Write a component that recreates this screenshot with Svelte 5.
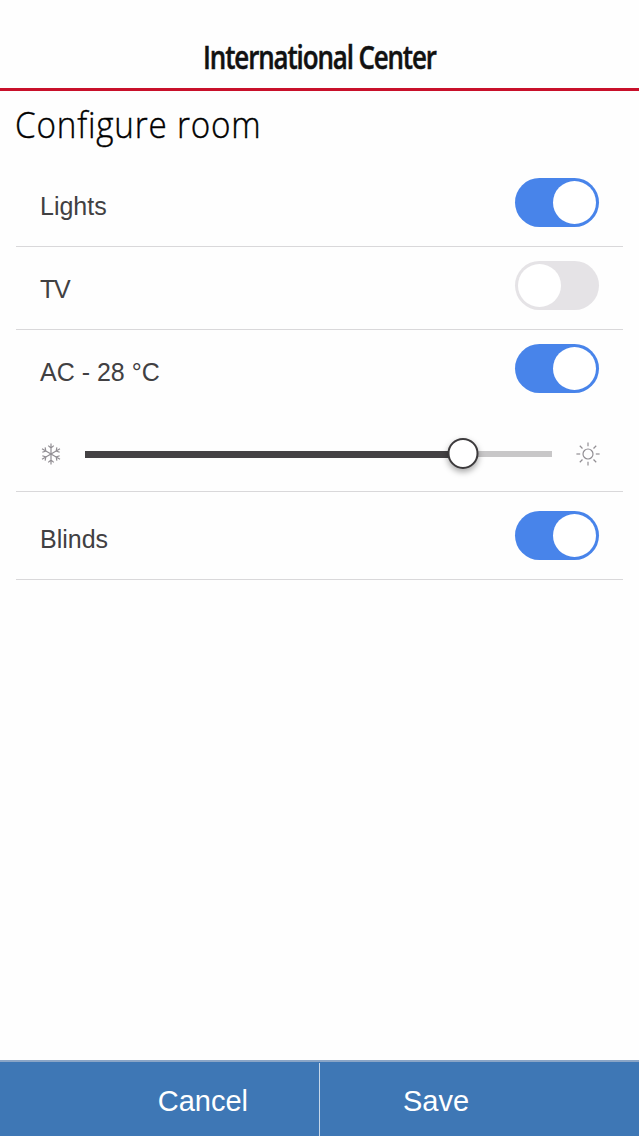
<script lang="ts">
  const MIN_TEMP = 10;
  const MAX_TEMP = 32.25;

  let lights = $state(true);
  let tv = $state(false);
  let ac = $state(true);
  let blinds = $state(true);
  let temperature = $state(28);

  let percent = $derived(((temperature - MIN_TEMP) / (MAX_TEMP - MIN_TEMP)) * 100);

  let track: HTMLDivElement;
  let dragging = false;

  function moveTo(e: PointerEvent) {
    const rect = track.getBoundingClientRect();
    const ratio = Math.max(0, Math.min(1, (e.clientX - rect.left) / rect.width));
    temperature = Math.round(MIN_TEMP + ratio * (MAX_TEMP - MIN_TEMP));
  }

  function onPointerDown(e: PointerEvent) {
    dragging = true;
    track.setPointerCapture(e.pointerId);
    moveTo(e);
  }

  function onPointerMove(e: PointerEvent) {
    if (dragging) moveTo(e);
  }

  function onPointerUp() {
    dragging = false;
  }
</script>

{#snippet toggle(label: string, on: boolean, flip: () => void)}
  <button class="toggle" class:on role="switch" aria-checked={on} aria-label={label} onclick={flip}>
    <span class="knob"></span>
  </button>
{/snippet}

<div class="screen">
  <header>
    <span class="brand">International Center</span>
  </header>

  <main>
    <h1><span>Configure room</span></h1>

    <section class="row first">
      <span class="label">Lights</span>
      {@render toggle('Lights', lights, () => (lights = !lights))}
    </section>

    <section class="row">
      <span class="label tight">TV</span>
      {@render toggle('TV', tv, () => (tv = !tv))}
    </section>

    <section class="row climate">
      <div class="line">
        <span class="label">AC - {temperature} °C</span>
        {@render toggle('AC', ac, () => (ac = !ac))}
      </div>
      <div class="slider">
        <svg viewBox="0 0 22 22" width="22" height="22">
          {#each [0, 60, 120, 180, 240, 300] as angle}
            <path d="M11 11V.6M8.2 2.6 11 5l2.8-2.4" transform="rotate({angle} 11 11)" />
          {/each}
        </svg>

        <!-- svelte-ignore a11y_no_static_element_interactions -->
        <div
          class="track"
          bind:this={track}
          onpointerdown={onPointerDown}
          onpointermove={onPointerMove}
          onpointerup={onPointerUp}
        >
          <div class="fill" style="width: {percent}%"></div>
          <div class="thumb" style="left: {percent}%"></div>
        </div>

        <svg viewBox="0 0 24 24" width="24" height="24">
          <circle cx="12" cy="12" r="5" />
          {#each [0, 45, 90, 135, 180, 225, 270, 315] as angle}
            <path d="M12 .4v3.8" transform="rotate({angle} 12 12)" />
          {/each}
        </svg>
      </div>
    </section>

    <section class="row last">
      <span class="label">Blinds</span>
      {@render toggle('Blinds', blinds, () => (blinds = !blinds))}
    </section>
  </main>

  <footer>
    <button class="cancel">Cancel</button>
    <button class="save">Save</button>
  </footer>
</div>

<style>
  :global(body) {
    background: #fefefe;
  }

  .screen {
    display: flex;
    flex-direction: column;
    height: 1136px;
    box-sizing: border-box;
    font-family: 'Liberation Sans', Arial, sans-serif;
    color: #414042;
    overflow: hidden;
  }

  header {
    display: flex;
    justify-content: center;
    height: 91px;
    box-sizing: border-box;
    padding-top: 37px;
    border-bottom: 3px solid #c8102a;
  }

  .brand {
    font: 600 33px/40px 'Open Sans', sans-serif;
    letter-spacing: -1.4px;
    color: #111;
    white-space: nowrap;
    transform: scaleX(0.784);
    -webkit-text-stroke: 0.5px #111;
  }

  main {
    flex: 1;
    padding: 0 16px;
  }

  h1 {
    height: 72px;
    margin: 0;
    font: 300 37px/66px 'Open Sans', sans-serif;
    color: #000;
    white-space: nowrap;
  }

  h1 span {
    display: inline-block;
    letter-spacing: 0.9px;
    transform: translateX(-1px) scaleX(0.898);
    transform-origin: 0 50%;
    -webkit-text-stroke: 0.4px #000;
  }

  .row {
    display: flex;
    justify-content: space-between;
    box-sizing: border-box;
    height: 83px;
    padding: 14px 24px 0;
    border-bottom: 1px solid #d9d8da;
  }

  .row.first {
    height: 84px;
    padding-top: 15px;
  }

  .row.climate {
    flex-direction: column;
    justify-content: flex-start;
    height: 162px;
  }

  .row.last {
    height: 88px;
    padding-top: 19px;
  }

  .line {
    display: flex;
    justify-content: space-between;
  }

  .label {
    font-size: 25px;
    line-height: 56px;
    white-space: nowrap;
  }

  .label.tight {
    letter-spacing: -1.2px;
  }

  .toggle {
    width: 84px;
    height: 49px;
    padding: 3px;
    border: 0;
    border-radius: 25px;
    background: #e5e3e6;
    cursor: pointer;
    text-align: left;
  }

  .toggle.on {
    background: #4884ea;
    text-align: right;
  }

  .knob {
    display: inline-block;
    width: 43px;
    height: 43px;
    border-radius: 50%;
    background: #fff;
    vertical-align: top;
  }

  .slider {
    display: flex;
    align-items: center;
    height: 32px;
    margin: 38px -1px 0 0;
  }

  svg {
    flex: none;
    fill: none;
    stroke: #918e93;
    stroke-width: 1.2;
  }

  .track {
    position: relative;
    flex: 1;
    height: 6px;
    margin: 0 24px 0 23px;
    background: #c8c7c8;
    cursor: pointer;
    touch-action: none;
  }

  .fill {
    height: 7px;
    background: #444244;
  }

  .thumb {
    position: absolute;
    top: 50%;
    width: 27px;
    height: 27px;
    border: 2px solid #3c3a3c;
    border-radius: 50%;
    background: #fff;
    box-shadow: 0 3px 6px rgba(0, 0, 0, 0.35);
    transform: translate(-50%, -52%);
  }

  footer {
    display: flex;
    height: 76px;
    box-sizing: border-box;
    border-top: 2px solid #8aa5c6;
    background: #3e77b5;
  }

  footer button {
    box-sizing: border-box;
    margin-top: 1px;
    border: 0 solid #c6d7e9;
    background: none;
    font: 29px 'Liberation Sans', Arial, sans-serif;
    color: #fff;
    cursor: pointer;
  }

  footer .cancel {
    width: 320px;
    padding: 4px 71px 0 0;
    border-right-width: 1px;
    text-align: right;
  }

  footer .save {
    flex: 1;
    padding: 4px 0 0 83px;
    text-align: left;
  }
</style>
